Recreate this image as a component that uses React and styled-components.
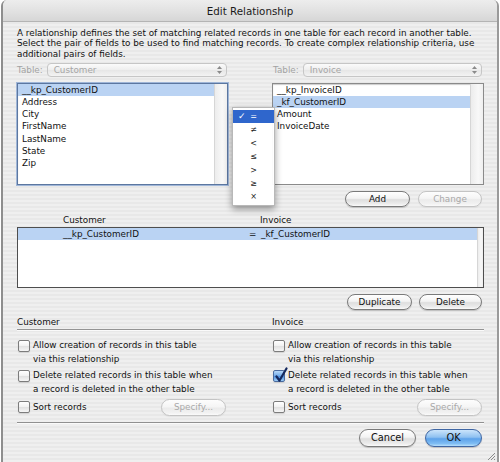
import React from 'react';
import styled, { createGlobalStyle } from 'styled-components';

const Global = createGlobalStyle`
  html, body { margin: 0; padding: 0; background: #ffffff; }
  body { font-family: "DejaVu Sans", "Liberation Sans", sans-serif; font-size: 8.8px; color: #111; }
  * { box-sizing: border-box; }
`;

const Window = styled.div`
  position: relative;
  width: 498px;
  height: 462px;
  margin-left: 1px;
  border-left: 2px solid #8e8e8e;
  border-right: 2px solid #9a9a9a;
  border-radius: 6px 6px 0 0;
  overflow: hidden;
  background: repeating-linear-gradient(to bottom, #efefef 0px, #efefef 2px, #e8e8e8 2px, #e8e8e8 4px);
  display: flex;
  flex-direction: column;
`;

const TitleBar = styled.div`
  height: 22px;
  flex: none;
  display: flex;
  align-items: center;
  justify-content: center;
  font-size: 10.3px;
  color: #1a1a1a;
  background: linear-gradient(to bottom, #ededed 0%, #e0e0e0 60%, #d6d6d6 100%);
  border-bottom: 1px solid #b4b4b4;
`;

const Body = styled.div`
  flex: 1;
  display: flex;
  flex-direction: column;
  padding: 6px 13px 0 14px;
`;

const Description = styled.p`
  margin: 0;
  line-height: 10.3px;
  white-space: nowrap;
  color: #111;
`;

const TwoCol = styled.div`
  display: grid;
  grid-template-columns: 211px 1fr;
  column-gap: 44px;
  margin-top: ${p => p.$mt || 0}px;
`;

const TableField = styled.div`
  display: flex;
  align-items: center;
  gap: 4px;
  height: 14px;
  padding-right: ${p => p.$pr}px;
`;

const FieldLabel = styled.span`
  color: #a3a3a3;
  padding-left: ${p => p.$pl || 0}px;
`;

const Popup = styled.div`
  flex: 1;
  height: 14px;
  display: flex;
  align-items: center;
  justify-content: space-between;
  padding: 0 3px 0 6px;
  border: 1px solid #c6c6c6;
  border-radius: 4px;
  background: linear-gradient(to bottom, #fbfbfb, #eeeeee 50%, #e6e6e6 51%, #f3f3f3);
  color: #a6a6a6;
`;

const ListBox = styled.div`
  height: 102px;
  display: flex;
  background: #fff;
  border: 1px solid ${p => (p.$focus ? '#5c77a0' : '#8a8a8a')};
  box-shadow: ${p => (p.$focus ? '0 0 0 1px #9fb6d8, inset 0 1px 1px rgba(0,0,0,0.2)' : 'inset 0 1px 1px rgba(0,0,0,0.2)')};
`;

const ListItems = styled.div`
  flex: 1;
  display: flex;
  flex-direction: column;
`;

const ListRow = styled.div`
  height: 12.2px;
  line-height: 12.2px;
  padding-left: ${p => p.$pl || 4}px;
  background: ${p => (p.$selected ? '#bad3f3' : 'transparent')};
  white-space: nowrap;
`;

const ScrollTrack = styled.div`
  width: ${p => p.$w || 13}px;
  background: linear-gradient(to right, #ececec, #f8f8f8 60%, #efefef);
  border-left: 1px solid #d6d6d6;
`;

const ButtonRow = styled.div`
  display: flex;
  justify-content: flex-end;
  align-items: center;
  gap: ${p => p.$gap || 8}px;
  padding-right: 2px;
  margin-top: ${p => p.$mt || 6}px;
`;

const AquaButton = styled.div`
  width: ${p => p.$w}px;
  height: ${p => p.$h || 16}px;
  display: flex;
  align-items: center;
  justify-content: center;
  border-radius: 9px;
  font-size: ${p => p.$fs || 8.8}px;
  color: ${p => (p.$disabled ? '#a9a9a9' : '#111')};
  border: 1px solid ${p => (p.$primary ? '#3f66a3' : p.$disabled ? '#c4c4c4' : '#7a7a7a')};
  background: ${p =>
    p.$primary
      ? 'linear-gradient(to bottom, #cbe4fb 0%, #8fc1f1 45%, #5da2ea 55%, #7fbdf3 85%, #b8e0fd 100%)'
      : p.$disabled
      ? 'linear-gradient(to bottom, #fdfdfd 0%, #f5f5f5 45%, #ebebeb 55%, #f2f2f2 85%, #fafafa 100%)'
      : 'linear-gradient(to bottom, #ffffff 0%, #f3f3f3 45%, #dedede 55%, #ececec 85%, #fbfbfb 100%)'};
  box-shadow: 0 1px 1px rgba(0, 0, 0, ${p => (p.$disabled ? 0.05 : 0.18)});
  white-space: nowrap;
`;

const ColumnHeaders = styled.div`
  display: grid;
  grid-template-columns: 46px 197px 1fr;
  height: 12px;
  line-height: 12px;
  margin-top: 7px;
`;

const RelList = styled.div`
  margin-top: 1px;
  height: 61px;
  display: flex;
  background: #fff;
  border: 1px solid #4e4e4e;
`;

const RelRow = styled.div`
  display: grid;
  grid-template-columns: 45px 186px 12px 1fr;
  height: 12px;
  line-height: 12px;
  background: ${p => (p.$selected ? '#bad3f3' : 'transparent')};
`;

const SectionHeader = styled.div`
  display: grid;
  grid-template-columns: 211px 1fr;
  column-gap: 44px;
  margin-top: 7px;
  height: 13px;
  line-height: 11px;
  border-bottom: 1px solid #949494;
  box-shadow: 0 1px 0 #fafafa;
`;

const OptionCol = styled.div`
  display: flex;
  flex-direction: column;
  gap: 2px;
  padding-right: 2px;
`;

const Option = styled.div`
  display: flex;
  align-items: flex-start;
  gap: 3px;
  line-height: 14px;
  padding-left: 1px;
`;

const SortRow = styled.div`
  display: flex;
  align-items: center;
  justify-content: space-between;
  margin-top: 1px;
  padding-left: 1px;
`;

const SortLabel = styled.div`
  display: flex;
  align-items: center;
  gap: 3px;
`;

const Box = styled.div`
  flex: none;
  position: relative;
  width: 12px;
  height: 12px;
  margin-top: ${p => p.$mt ?? 2}px;
  border-radius: 2px;
  border: 1px solid ${p => (p.$checked ? '#4b6b9e' : '#7c7c7c')};
  background: ${p =>
    p.$checked
      ? 'linear-gradient(to bottom, #b7d8f8, #6fa9ea 50%, #4f91e2 55%, #9dccf6)'
      : 'linear-gradient(to bottom, #ffffff, #f1f1f1 50%, #e2e2e2 55%, #f6f6f6)'};
  box-shadow: 0 1px 1px rgba(0, 0, 0, 0.12);
`;

const CheckMark = styled.svg`
  position: absolute;
  left: 0px;
  top: -4px;
`;

const Divider = styled.div`
  margin-top: 6px;
  border-top: 1px solid #909090;
  border-bottom: 1px solid #fafafa;
`;

const Menu = styled.div`
  position: absolute;
  left: 229px;
  top: 107px;
  width: 43px;
  padding: 2px 0 1px;
  background: rgba(255, 255, 255, 0.97);
  border: 1px solid #b8b8b8;
  box-shadow: 0 3px 7px rgba(0, 0, 0, 0.4);
  display: flex;
  flex-direction: column;
`;

const MenuItem = styled.div`
  position: relative;
  height: 13.4px;
  line-height: 13.4px;
  text-align: center;
  font-size: 8px;
  color: ${p => (p.$active ? '#fff' : '#222')};
  background: ${p => (p.$active ? '#2f66cc' : 'transparent')};
`;

const MenuCheck = styled.span`
  position: absolute;
  left: 5px;
  top: 0;
  font-size: 9px;
  font-weight: bold;
`;

const Grip = styled.svg`
  position: absolute;
  right: 1px;
  bottom: 1px;
`;

const Arrows = () => (
  <svg width="7" height="10" viewBox="0 0 7 10">
    <path d="M3.5 1 L6 4 L1 4 Z" fill="#8a8a8a" />
    <path d="M3.5 9 L6 6 L1 6 Z" fill="#8a8a8a" />
  </svg>
);

const Checkbox = ({ checked, mt }) => (
  <Box $checked={checked} $mt={mt}>
    {checked && (
      <CheckMark width="14" height="16" viewBox="0 0 14 16">
        <path d="M2.5 9.5 L5.5 13.5 L12.5 1.5" fill="none" stroke="#14285e" strokeWidth="2.2" strokeLinecap="round" strokeLinejoin="round" />
      </CheckMark>
    )}
  </Box>
);

const customerFields = ['__kp_CustomerID', 'Address', 'City', 'FirstName', 'LastName', 'State', 'Zip'];
const invoiceFields = ['__kp_InvoiceID', '_kf_CustomerID', 'Amount', 'InvoiceDate'];
const operators = ['=', '≠', '<', '≤', '>', '≥', '×'];

const Options = ({ deleteChecked }) => (
  <OptionCol>
    <Option>
      <Checkbox />
      <span>Allow creation of records in this table<br />via this relationship</span>
    </Option>
    <Option>
      <Checkbox checked={deleteChecked} />
      <span>Delete related records in this table when<br />a record is deleted in the other table</span>
    </Option>
    <SortRow>
      <SortLabel>
        <Checkbox mt={0} />
        <span>Sort records</span>
      </SortLabel>
      <AquaButton $w={65} $h={17} $disabled>Specify...</AquaButton>
    </SortRow>
  </OptionCol>
);

export default function App() {
  return (
    <>
      <Global />
      <Window>
        <TitleBar>Edit Relationship</TitleBar>
        <Body>
          <Description>
            A relationship defines the set of matching related records in one table for each record in another table.<br />
            Select the pair of fields to be used to find matching records. To create complex relationship criteria, use<br />
            additional pairs of fields.
          </Description>

          <TwoCol $mt={4}>
            <TableField $pr={1}>
              <FieldLabel>Table:</FieldLabel>
              <Popup><span>Customer</span><Arrows /></Popup>
            </TableField>
            <TableField $pr={2}>
              <FieldLabel $pl={1}>Table:</FieldLabel>
              <Popup><span>Invoice</span><Arrows /></Popup>
            </TableField>
          </TwoCol>

          <TwoCol $mt={6}>
            <ListBox $focus>
              <ListItems>
                {customerFields.map((f, i) => (
                  <ListRow key={f} $selected={i === 0}>{f}</ListRow>
                ))}
              </ListItems>
              <ScrollTrack />
            </ListBox>
            <ListBox>
              <ListItems>
                {invoiceFields.map((f, i) => (
                  <ListRow key={f} $pl={4} $selected={i === 1}>{f}</ListRow>
                ))}
              </ListItems>
              <ScrollTrack />
            </ListBox>
          </TwoCol>

          <ButtonRow $mt={6} $gap={8}>
            <AquaButton $w={65}>Add</AquaButton>
            <AquaButton $w={64} $disabled>Change</AquaButton>
          </ButtonRow>

          <ColumnHeaders>
            <span />
            <span>Customer</span>
            <span>Invoice</span>
          </ColumnHeaders>

          <RelList>
            <ListItems>
              <RelRow $selected>
                <span />
                <span>__kp_CustomerID</span>
                <span>=</span>
                <span>_kf_CustomerID</span>
              </RelRow>
            </ListItems>
            <ScrollTrack $w={6} />
          </RelList>

          <ButtonRow $mt={6} $gap={7}>
            <AquaButton $w={65}>Duplicate</AquaButton>
            <AquaButton $w={63}>Delete</AquaButton>
          </ButtonRow>

          <SectionHeader>
            <span>Customer</span>
            <span>Invoice</span>
          </SectionHeader>

          <TwoCol $mt={8}>
            <Options />
            <Options deleteChecked />
          </TwoCol>

          <Divider />

          <ButtonRow $mt={5} $gap={9}>
            <AquaButton $w={57} $h={18} $fs={9.8}>Cancel</AquaButton>
            <AquaButton $w={57} $h={18} $fs={9.8} $primary>OK</AquaButton>
          </ButtonRow>
        </Body>

        <Menu>
          {operators.map((op, i) => (
            <MenuItem key={op} $active={i === 0}>
              {i === 0 && <MenuCheck>✓</MenuCheck>}
              {op}
            </MenuItem>
          ))}
        </Menu>

        <Grip width="10" height="10" viewBox="0 0 10 10">
          <path d="M9 2 L2 9 M9 5 L5 9 M9 8 L8 9" stroke="#8a8a8a" strokeWidth="1" />
        </Grip>
      </Window>
    </>
  );
}
